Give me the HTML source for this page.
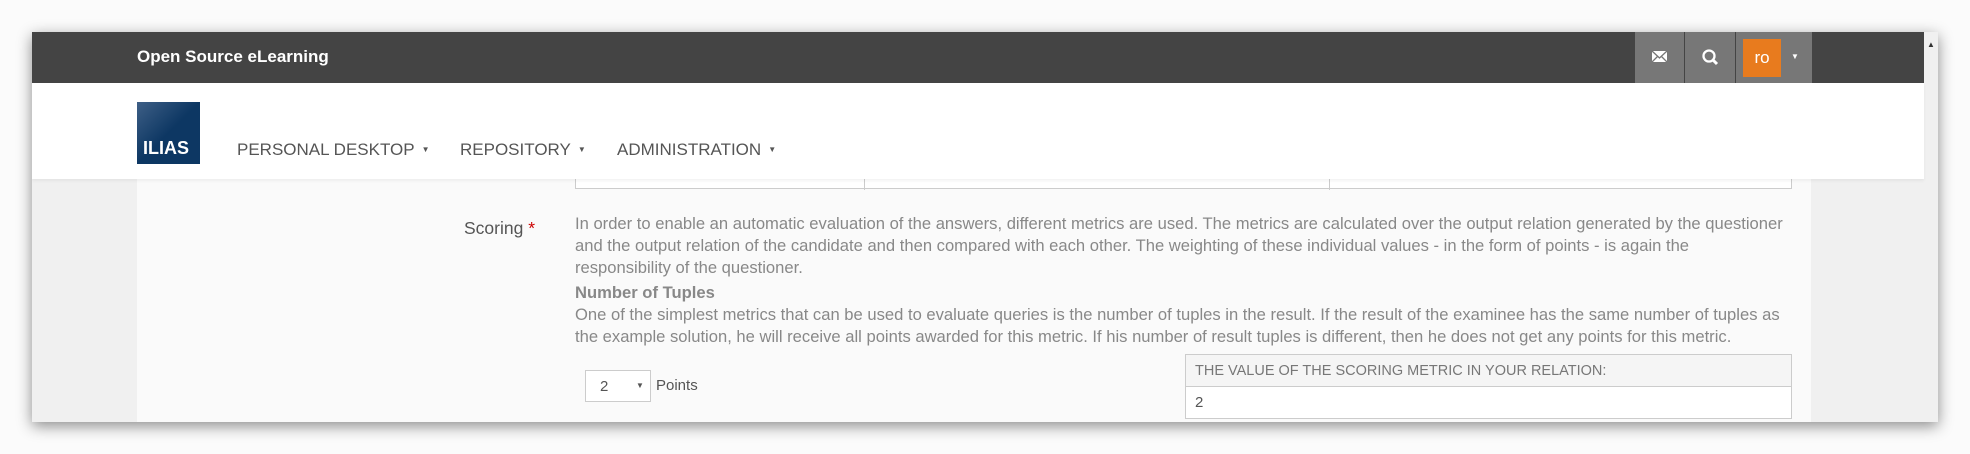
<!DOCTYPE html>
<html><head><meta charset="utf-8"><style>
*{margin:0;padding:0;box-sizing:border-box}
body{width:1970px;height:454px;background:#fbfbfb;position:relative;overflow:hidden;font-family:"Liberation Sans",sans-serif}
.win{position:absolute;left:32px;top:32px;width:1906px;height:390px;background:#f0f0f0;box-shadow:0 4px 14px rgba(0,0,0,.45);overflow:hidden}
.top{position:absolute;left:0;top:0;width:1892px;height:51px;background:#444}
.brand{position:absolute;left:105px;top:15px;color:#fff;font-weight:bold;font-size:17px}
.ib{position:absolute;top:0;height:51px;background:#777}
.hdr{position:absolute;left:0;top:51px;width:1892px;height:96px;background:#fff;box-shadow:0 2px 3px rgba(0,0,0,.05);z-index:2}
.logo{position:absolute;left:105px;top:19px;width:63px;height:62px;background:linear-gradient(135deg,#3e5f86,#0d3763 50%);color:#fff;font-size:18px;line-height:1;font-weight:bold;padding:37px 0 0 6px}
.nav{position:absolute;top:57px;color:#555;font-size:17px;white-space:nowrap}
.nav span{font-size:8px;margin-left:7px;vertical-align:3px}
.panel{position:absolute;left:105px;top:147px;width:1674px;height:250px;background:#fafafa}
.scr{position:absolute;left:1892px;top:0;width:14px;height:390px;background:#f0f0f0}
.t{position:absolute;white-space:nowrap;color:#888;font-size:16.6px}
</style></head><body>
<div class="win">
<div class="top"><div class="brand">Open Source eLearning</div>
<div class="ib" style="left:1603px;width:49px"><svg width="49" height="51"><rect x="17" y="19" width="15" height="11" fill="#fff"/><path d="M17 19 L24.5 26 L32 19 M17 30 L23 24 M32 30 L26 24" stroke="#777" stroke-width="1.3" fill="none"/></svg></div>
<div class="ib" style="left:1653px;width:50px"><svg width="50" height="51"><circle cx="24" cy="24" r="5.5" stroke="#fff" stroke-width="2.3" fill="none"/><path d="M28 28 L32 32" stroke="#fff" stroke-width="3"/></svg></div>
<div class="ib" style="left:1704px;width:76px"><div style="position:absolute;left:7px;top:7px;width:38px;height:38px;background:#e87b1e;color:#fff;font-size:17px;text-align:center;line-height:38px">ro</div><div style="position:absolute;left:55px;top:20px;color:#fff;font-size:8px">▼</div></div>
</div>
<div class="hdr"><div class="logo">ILIAS</div>
<div class="nav" style="left:205px">PERSONAL DESKTOP<span>▼</span></div>
<div class="nav" style="left:428px">REPOSITORY<span>▼</span></div>
<div class="nav" style="left:585px">ADMINISTRATION<span>▼</span></div>
</div>
<div class="panel">
<div style="position:absolute;left:438px;top:-10px;width:1217px;height:20px;border:1px solid #ccc;background:#fff"><div style="position:absolute;left:288px;top:0;height:20px;border-left:1px solid #ccc"></div><div style="position:absolute;left:753px;top:0;height:20px;border-left:1px solid #ccc"></div></div>
<div class="t" style="left:327px;top:39px;color:#555;font-size:17.5px">Scoring <span style="color:#c00">*</span></div>
<div class="t" style="left:438px;top:35px">In order to enable an automatic evaluation of the answers, different metrics are used. The metrics are calculated over the output relation generated by the questioner</div>
<div class="t" style="left:438px;top:57px">and the output relation of the candidate and then compared with each other. The weighting of these individual values - in the form of points - is again the</div>
<div class="t" style="left:438px;top:79px">responsibility of the questioner.</div>
<div class="t" style="left:438px;top:104px;font-weight:bold">Number of Tuples</div>
<div class="t" style="left:438px;top:126px">One of the simplest metrics that can be used to evaluate queries is the number of tuples in the result. If the result of the examinee has the same number of tuples as</div>
<div class="t" style="left:438px;top:148px">the example solution, he will receive all points awarded for this metric. If his number of result tuples is different, then he does not get any points for this metric.</div>
<div style="position:absolute;left:448px;top:191px;width:66px;height:32px;border:1px solid #ccc;background:#fff;font-size:15px;color:#555;padding:7px 0 0 14px">2<span style="position:absolute;left:50px;top:10px;font-size:8px">▼</span></div>
<div class="t" style="left:519px;top:198px;color:#555;font-size:15px">Points</div>
<div style="position:absolute;left:1048px;top:175px;width:607px;height:65px;border:1px solid #ccc;background:#fff">
<div style="height:32px;background:#f5f5f5;border-bottom:1px solid #ccc;color:#777;font-size:14.5px;padding:8px 0 0 9px">THE VALUE OF THE SCORING METRIC IN YOUR RELATION:</div>
<div style="color:#555;font-size:15px;padding:7px 0 0 9px">2</div></div>
</div>
<div class="scr"><div style="margin:8px 0 0 3px;font-size:8px;color:#333">▲</div></div>
</div>
</body></html>
